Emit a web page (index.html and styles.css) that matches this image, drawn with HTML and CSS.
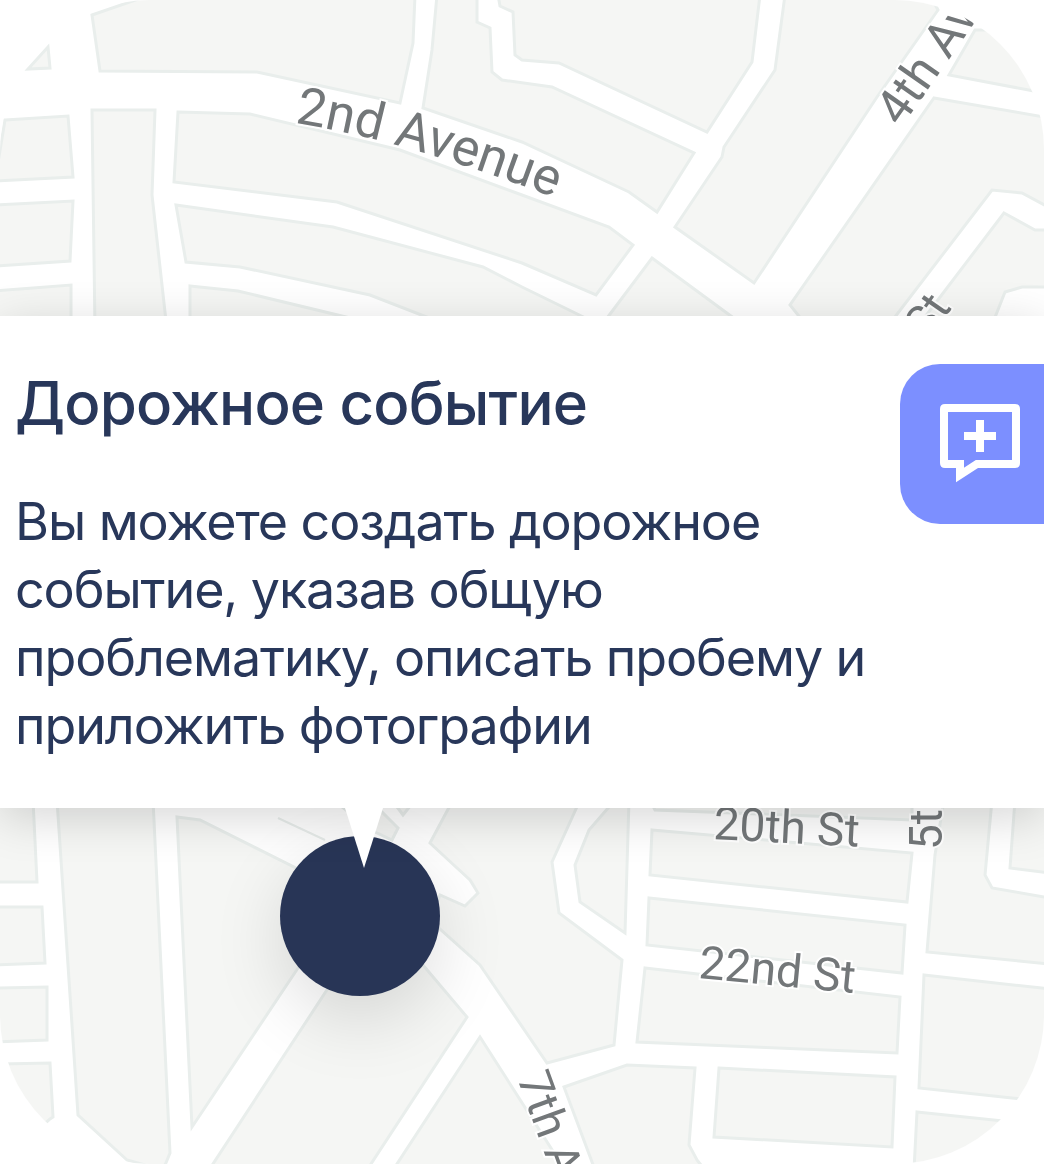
FILE: index.html
```html
<!DOCTYPE html>
<html lang="ru">
<head>
<meta charset="utf-8">
<title>Дорожное событие</title>
<link rel="stylesheet" href="styles.css">
</head>
<body>
<main class="screen">
  <div class="map">
    <svg class="map-svg" viewBox="0 0 1044 1164" width="1044" height="1164">
      <defs>
        <path id="av2" d="M295 123 Q410 141 565 202"/>
      </defs>
      <g class="blocks">
        <polygon points="92,15 150,-5 415,-5 413,43 400,103 257,72 100,71"/>
        <polygon points="48,47 50,68 28,69"/>
        <polygon points="5,120 68,116 73,177 -5,181"/>
        <polygon points="-5,205 73,201 70,261 -5,266"/>
        <polygon points="-5,291 71,285 71,330 -5,330"/>
        <polygon points="92,110 155,110 152,195 167,330 95,330"/>
        <polygon points="178,112 250,114 400,150 522,195 609,227 633,245 596,295 522,263 337,202 174,182"/>
        <polygon points="176,205 333,227 483,267 522,287 610,330 460,330 370,295 240,267 186,262"/>
        <polygon points="190,286 238,291 400,330 190,330"/>
        <polygon points="437,-5 477,-5 477,22 490,28 492,72 502,80 552,87 694,153 657,212 629,192 522,142 423,108 432,50"/>
        <polygon points="498,-5 500,6 513,12 515,55 522,60 559,63 707,132 752,62 760,-5"/>
        <polygon points="785,-5 775,70 724,147 722,157 675,227 754,283 877,97 938,10 930,-5"/>
        <polygon points="949,75 975,30 1050,30 1050,94"/>
        <polygon points="934,98 1050,118 1050,208 1022,193 992,190 885,330 810,330 790,305"/>
        <polygon points="1004,213 1035,230 1050,230 1050,287 1022,287 1005,292 990,330 915,330"/>
        <polygon points="652,258 750,330 598,330"/>

        <polygon points="-5,800 33,800 37,882 -5,882"/>
        <polygon points="-5,907 42,907 45,963 -5,965"/>
        <polygon points="-5,988 47,987 47,1040 -5,1042"/>
        <polygon points="-5,1064 50,1063 53,1117 50,1119 -5,1170"/>
        <polygon points="57,800 153,800 170,1153 163,1170 127,1160 78,1115"/>
        <polygon points="177,817 200,820 320,880 300,965 192,1127"/>
        <polygon points="333,800 375,832 392,840 398,828 370,800"/>
        <polygon points="392,800 403,815 415,800"/>
        <polygon points="453,800 430,843 470,880 478,893 465,906 440,895 430,920 480,965 547,1063 614,1045 622,960 559,913 552,862 580,800"/>
        <polygon points="340,970 423,965 467,1017 367,1170 209,1170"/>
        <polygon points="480,1037 565,1170 393,1170"/>
        <polygon points="564,1087 627,1065 695,1068 689,1145 697,1160 705,1170 595,1170"/>
        <polygon points="719,1068 895,1077 892,1147 714,1137"/>
        <polygon points="917,1112 1050,1126 1050,1170 914,1170"/>
        <polygon points="650,800 912,800 912,820 655,810"/>
        <polygon points="652,830 912,853 907,902 650,875"/>
        <polygon points="649,898 905,925 902,973 647,945"/>
        <polygon points="645,968 900,997 897,1053 637,1042"/>
        <polygon points="944,800 992,800 985,875 992,888 1050,898 1050,964 927,952 935,855"/>
        <polygon points="1015,800 1010,868 1050,873 1050,800"/>
        <polygon points="924,975 1050,989 1050,1102 1012,1098 919,1088"/>
        <polygon points="629,800 625,933 580,902 575,865 589,830 615,800"/>
      </g>
      <polyline class="road-line" points="278,818 325,840"/>
      <g class="labels">
        <text class="label-lg"><textPath href="#av2">2nd Avenue</textPath></text>
        <text class="label-md" transform="translate(901 128) rotate(-55)">4th Ave</text>
        <text transform="translate(928 342) rotate(-55)">St</text>
        <text transform="translate(713 839) rotate(3)">20th St</text>
        <text transform="translate(942 850) rotate(-90)">5th</text>
        <text transform="translate(698 978) rotate(5.5)">22nd St</text>
        <text transform="translate(517 1078) rotate(70)">7th Ave</text>
      </g>
    </svg>
  </div>

  <div class="pin"></div>

  <section class="panel">
    <h1 class="panel-title">Дорожное событие</h1>
    <p class="panel-text">Вы можете создать дорожное событие, указав общую проблематику, описать пробему и приложить фотографии</p>
    <button class="action" type="button" aria-label="Добавить">
      <svg class="action-icon" viewBox="0 0 80 80" width="80" height="80">
        <path class="bubble" d="M4 5 Q4 4 5 4 H75 Q76 4 76 5 V59 Q76 60 75 60 H37 L20 71 V60 H5 Q4 60 4 59 Z"/>
        <path class="plus" d="M36 16 H44 V28 H56 V36 H44 V48 H36 V36 H24 V28 H36 Z"/>
      </svg>
    </button>
    <svg class="pointer" viewBox="0 0 38 60" width="38" height="60"><polygon points="0,0 38,0 19,60"/></svg>
  </section>
</main>
</body>
</html>
```

FILE: styles.css
```css
* { box-sizing: border-box; }
html, body { margin: 0; padding: 0; background: #fff; }
.screen {
  position: relative;
  width: 1044px;
  height: 1164px;
  padding-top: 316px;
  overflow: hidden;
  font-family: Inter, "Noto Sans", sans-serif;
  color: #28375a;
}
.map {
  position: absolute;
  inset: 0;
  border-radius: 150px;
  overflow: hidden;
  background: #fff;
}
.map-svg { display: block; filter: blur(0.5px); }
.blocks polygon {
  fill: #f5f6f4;
  stroke: #e9eeec;
  stroke-width: 3;
}
.road-line {
  fill: none;
  stroke: #e9eeec;
  stroke-width: 2;
}
.labels text {
  font-family: Roboto, "Liberation Sans", sans-serif;
  font-size: 46px;
  font-weight: 400;
  fill: #737779;
  stroke: #fff;
  stroke-width: 4px;
  paint-order: stroke;
}
.labels .label-lg { font-size: 52px; }
.labels .label-md { font-size: 49px; }
.pin {
  position: absolute;
  left: 280px;
  top: 836px;
  width: 160px;
  height: 160px;
  border-radius: 50%;
  background: #283556;
  box-shadow: 0 24px 70px rgba(0, 0, 0, 0.13);
}
.panel {
  position: relative;
  height: 492px;
  padding: 47px 15px 0;
  background: #fff;
  box-shadow: 0 10px 44px rgba(0, 0, 0, 0.16);
}
.panel-title {
  margin: 0;
  font-size: 60px;
  line-height: 80px;
  font-weight: 500;
  letter-spacing: -0.8px;
}
.panel-text {
  margin: 45px 0 0;
  width: 870px;
  font-size: 52px;
  line-height: 68px;
  font-weight: 400;
  letter-spacing: -1.1px;
}
.action {
  position: absolute;
  left: 900px;
  top: 48px;
  width: 200px;
  height: 160px;
  padding: 40px 0 0 40px;
  border: 0;
  border-radius: 40px;
  background: #7c8fff;
  display: flex;
  align-items: flex-start;
}
.action-icon { display: block; }
.bubble { fill: none; stroke: #fff; stroke-width: 8; }
.plus { fill: #fff; }
.pointer {
  position: absolute;
  left: 345px;
  top: 492px;
  display: block;
}
.pointer polygon { fill: #fff; }
```
